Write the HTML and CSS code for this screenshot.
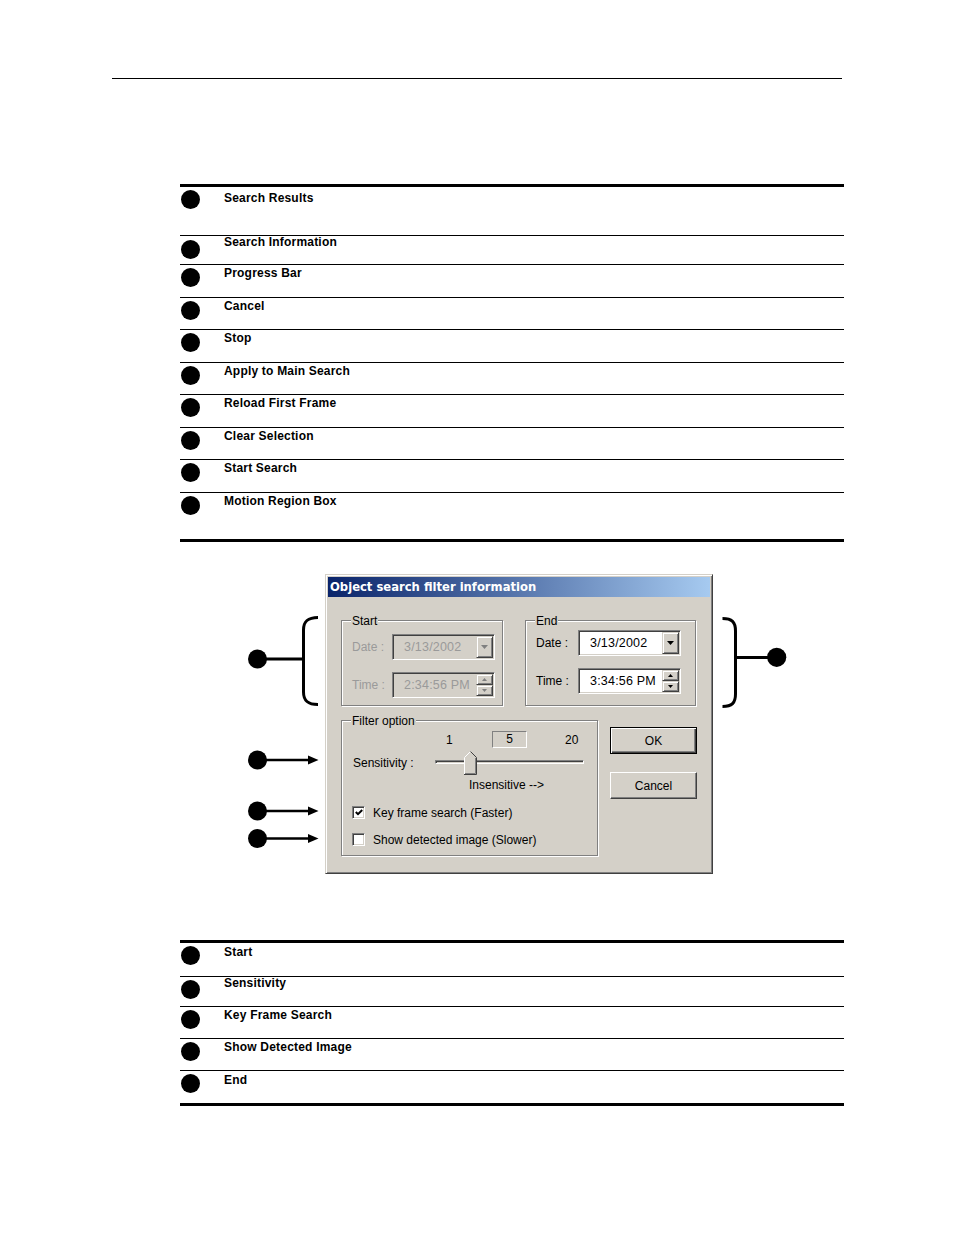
FILE: index.html
```html
<!DOCTYPE html>
<html>
<head>
<meta charset="utf-8">
<title>Object search filter information</title>
<link rel="stylesheet" href="styles.css">
</head>
<body>
<div class="page">
  <div class="toprule"></div>

  <div class="legend legend1">
    <div class="row h49 first"><span class="dot"></span><span class="lbl">Search Results</span></div>
    <div class="row h29"><span class="dot"></span><span class="lbl">Search Information</span></div>
    <div class="row h33"><span class="dot"></span><span class="lbl">Progress Bar</span></div>
    <div class="row h32"><span class="dot"></span><span class="lbl">Cancel</span></div>
    <div class="row h33"><span class="dot"></span><span class="lbl">Stop</span></div>
    <div class="row h32"><span class="dot"></span><span class="lbl">Apply to Main Search</span></div>
    <div class="row h33"><span class="dot"></span><span class="lbl">Reload First Frame</span></div>
    <div class="row h32"><span class="dot"></span><span class="lbl">Clear Selection</span></div>
    <div class="row h33"><span class="dot"></span><span class="lbl">Start Search</span></div>
    <div class="row h49 last"><span class="dot"></span><span class="lbl">Motion Region Box</span></div>
  </div>

  <div class="figure">
    <svg class="callouts" width="954" height="358" viewBox="0 542 954 358">
      <g fill="none" stroke="#000" stroke-width="3">
        <path d="M318,617.5 C308,617.5 303.5,621 303.5,630 L303.5,692 C303.5,701 308,704.5 318,704.5"/>
        <line x1="257" y1="659" x2="303.5" y2="659"/>
        <path d="M722.5,618.5 C732,618.5 735.5,622 735.5,631 L735.5,694 C735.5,703 732,706.5 722.5,706.5"/>
        <line x1="735.5" y1="657.5" x2="777" y2="657.5"/>
      </g>
      <g stroke="#000" stroke-width="2.5">
        <line x1="257" y1="760" x2="311" y2="760"/>
        <line x1="257" y1="811" x2="311" y2="811"/>
        <line x1="257" y1="838.5" x2="311" y2="838.5"/>
      </g>
      <g fill="#000">
        <circle cx="257.5" cy="659" r="9.5"/>
        <circle cx="776.7" cy="657.3" r="9.6"/>
        <circle cx="257.5" cy="760" r="9.5"/>
        <circle cx="257.5" cy="811" r="9.5"/>
        <circle cx="257.5" cy="838.5" r="9.5"/>
        <polygon points="308,755.5 318.5,760 308,764.5"/>
        <polygon points="308,806.5 318.5,811 308,815.5"/>
        <polygon points="308,834 318.5,838.5 308,843"/>
      </g>
    </svg>

    <div class="dialog">
      <div class="titlebar">Object search filter information</div>
      <div class="dlgbody">
        <div class="toprow">
          <div class="group g-start">
            <span class="glabel">Start</span>
            <div class="frow">
              <span class="flabel dis">Date :</span>
              <div class="field dis">
                <span class="ftext">3/13/2002</span>
                <span class="wbtn"><svg width="7" height="4" viewBox="0 0 7 4"><polygon points="0,0 7,0 3.5,4" fill="#808080"/></svg></span>
              </div>
            </div>
            <div class="frow">
              <span class="flabel dis">Time :</span>
              <div class="field dis">
                <span class="ftext">2:34:56 PM</span>
                <span class="spin">
                  <span class="wbtn"><svg width="5" height="3" viewBox="0 0 5 3"><polygon points="0,3 5,3 2.5,0" fill="#808080"/></svg></span>
                  <span class="wbtn"><svg width="5" height="3" viewBox="0 0 5 3"><polygon points="0,0 5,0 2.5,3" fill="#808080"/></svg></span>
                </span>
              </div>
            </div>
          </div>
          <div class="group g-end">
            <span class="glabel">End</span>
            <div class="frow">
              <span class="flabel">Date :</span>
              <div class="field">
                <span class="ftext">3/13/2002</span>
                <span class="wbtn"><svg width="7" height="4" viewBox="0 0 7 4"><polygon points="0,0 7,0 3.5,4" fill="#000"/></svg></span>
              </div>
            </div>
            <div class="frow">
              <span class="flabel">Time :</span>
              <div class="field">
                <span class="ftext">3:34:56 PM</span>
                <span class="spin">
                  <span class="wbtn"><svg width="5" height="3" viewBox="0 0 5 3"><polygon points="0,3 5,3 2.5,0" fill="#000"/></svg></span>
                  <span class="wbtn"><svg width="5" height="3" viewBox="0 0 5 3"><polygon points="0,0 5,0 2.5,3" fill="#000"/></svg></span>
                </span>
              </div>
            </div>
          </div>
        </div>

        <div class="secrow">
          <div class="group g-filter">
            <span class="glabel">Filter option</span>
            <div class="numrow">
              <span class="n1">1</span>
              <span class="n5">5</span>
              <span class="n20">20</span>
            </div>
            <div class="slrow">
              <span class="sllabel">Sensitivity :</span>
              <div class="slider">
                <div class="track"></div>
                <svg class="thumb" width="13" height="24" viewBox="0 0 13 24">
                  <polygon points="0.5,6.5 6.5,0.5 12.5,6.5 12.5,23.5 0.5,23.5" fill="#d4d0c8"/>
                  <polyline points="0.5,23 0.5,6.5 6.5,0.5" fill="none" stroke="#fff" stroke-width="1"/>
                  <polyline points="6.5,0.5 12.5,6.5 12.5,23.5 0,23.5" fill="none" stroke="#404040" stroke-width="1"/>
                  <polyline points="11.5,7 11.5,22.5 1,22.5" fill="none" stroke="#808080" stroke-width="1"/>
                </svg>
              </div>
            </div>
            <div class="insrow">Insensitive --&gt;</div>
            <div class="cbrow cb1">
              <span class="cbox"><svg width="8" height="7" viewBox="0 0 8 7"><polyline points="0.8,3 3,5.2 7.2,1" fill="none" stroke="#000" stroke-width="2"/></svg></span>
              <span class="cbtext">Key frame search (Faster)</span>
            </div>
            <div class="cbrow cb2">
              <span class="cbox"></span>
              <span class="cbtext">Show detected image (Slower)</span>
            </div>
          </div>
          <div class="btncol">
            <div class="pbtn ok">OK</div>
            <div class="pbtn cancel">Cancel</div>
          </div>
        </div>
      </div>
    </div>
  </div>

  <div class="legend legend2">
    <div class="row h34"><span class="dot"></span><span class="lbl">Start</span></div>
    <div class="row h30"><span class="dot"></span><span class="lbl">Sensitivity</span></div>
    <div class="row h32"><span class="dot"></span><span class="lbl">Key Frame Search</span></div>
    <div class="row h32"><span class="dot"></span><span class="lbl">Show Detected Image</span></div>
    <div class="row h35 last"><span class="dot"></span><span class="lbl">End</span></div>
  </div>
</div>
</body>
</html>
```

FILE: styles.css
```css
* { box-sizing: border-box; }
html, body { margin: 0; padding: 0; background: #fff; }
body { font-family: "Liberation Sans", Arial, sans-serif; color: #000; }

.page { width: 954px; height: 1235px; position: relative; overflow: hidden; }

.toprule { margin: 78px 0 0 112px; width: 730px; height: 1px; background: #000; }

/* legend tables */
.legend { margin-left: 180px; width: 664px; border-top: 3px solid #000; }
.legend1 { margin-top: 105px; }
.legend2 { margin-top: 40px; }
.row { display: flex; align-items: flex-start; border-bottom: 1px solid #000; padding-top: 2px; }
.row.last { border-bottom: 3px solid #000; }
.h29 { height: 29px; }
.h30 { height: 30px; }
.h32 { height: 32px; }
.h33 { height: 33px; }
.h34 { height: 34px; }
.h35 { height: 35px; }
.h49 { height: 49px; }
.dot { flex: none; width: 19px; height: 19px; border-radius: 50%; background: #000; margin: 1px 0 0 1px; }
.lbl { margin-left: 24px; margin-top: -1px; font-weight: bold; font-size: 12px; line-height: 14px; letter-spacing: 0.2px; white-space: nowrap; }
.h29 .lbl, .h30 .lbl { margin-top: -3px; }
.h29 .dot { margin-top: 2px; }
.row.first .lbl { margin-top: 2px; }
.h34 .lbl, .h35 .lbl { margin-top: 0; }

/* figure */
.figure { position: relative; height: 358px; padding-top: 32px; }
.callouts { position: absolute; left: 0; top: 0; }

.dialog {
  margin-left: 325px; width: 388px; height: 300px; padding: 2px;
  background: #d4d0c8;
  border: 1px solid; border-color: #d4d0c8 #404040 #404040 #d4d0c8;
  box-shadow: inset 1px 1px 0 #fff, inset -1px -1px 0 #808080;
  font-size: 12px; line-height: 14px; color: #000;
}
.titlebar {
  height: 20px; padding-left: 2px;
  background: linear-gradient(to right, #0a246a, #a6caf0);
  color: #fff; font-family: "DejaVu Sans", sans-serif; font-weight: bold;
  font-size: 11.6px; line-height: 21px; white-space: nowrap;
}
.dlgbody { padding: 23px 0 0 13px; }
.toprow { display: flex; gap: 22px; height: 86px; }
.secrow { display: flex; margin-top: 14px; }

.group { position: relative; border: 1px solid #808080; box-shadow: inset 1px 1px 0 #fff, 1px 1px 0 #fff; }
.glabel { position: absolute; left: 9px; top: -7px; background: #d4d0c8; padding: 0 1px; white-space: nowrap; }

.g-start { width: 162px; padding: 13px 0 0 10px; }
.g-end { width: 171px; padding: 9px 0 0 10px; }
.frow { display: flex; align-items: center; height: 26px; }
.frow + .frow { margin-top: 12px; }
.g-start .flabel { width: 40px; }
.g-end .flabel { width: 42px; }
.dis { color: #9a9a9a; }

.field {
  width: 103px; height: 26px; display: flex; padding: 1px; background: #fff;
  border: 1px solid; border-color: #808080 #fff #fff #808080;
  box-shadow: inset 1px 1px 0 #404040, inset -1px -1px 0 #d4d0c8;
}
.field.dis { background: #d4d0c8; }
.ftext { flex: 1; padding-left: 10px; line-height: 22px; font-size: 12.5px; letter-spacing: 0.2px; white-space: nowrap; }
.wbtn {
  width: 17px; height: 22px; display: flex; align-items: center; justify-content: center;
  background: #d4d0c8;
  border: 1px solid; border-color: #d4d0c8 #404040 #404040 #d4d0c8;
  box-shadow: inset 1px 1px 0 #fff, inset -1px -1px 0 #808080;
}
.spin { width: 17px; display: flex; flex-direction: column; }
.spin .wbtn { height: 11px; }

.g-filter { width: 257px; height: 136px; padding: 10px 0 0 10px; }
.numrow { display: flex; align-items: center; height: 17px; padding-left: 94px; }
.n1 { width: 7px; }
.n5 {
  margin-left: 39px; width: 35px; height: 17px; text-align: center; line-height: 15px;
  border: 1px solid; border-color: #808080 #fff #fff #808080;
}
.n20 { margin-left: 38px; }
.slrow { display: flex; align-items: center; height: 25px; margin-top: 2px; }
.sllabel { width: 83px; padding-left: 1px; white-space: nowrap; }
.slider { position: relative; width: 149px; height: 25px; padding-top: 10px; }
.track {
  height: 4px; background: #d4d0c8;
  border: 1px solid; border-color: #808080 #fff #fff #808080;
  box-shadow: inset 1px 1px 0 #404040;
}
.thumb { position: absolute; left: 29px; top: 1px; }
.insrow { margin-top: 3px; height: 14px; padding-left: 117px; white-space: nowrap; }
.cbrow { display: flex; align-items: center; height: 17px; }
.cb1 { margin-top: 12px; }
.cb2 { margin-top: 10px; }
.cbox {
  width: 13px; height: 13px; display: flex; align-items: center; justify-content: center; background: #fff;
  border: 1px solid; border-color: #808080 #fff #fff #808080;
  box-shadow: inset 1px 1px 0 #404040, inset -1px -1px 0 #d4d0c8;
}
.cbtext { margin-left: 8px; white-space: nowrap; }

.btncol { margin-left: 12px; display: flex; flex-direction: column; }
.pbtn { width: 87px; height: 27px; display: flex; align-items: center; justify-content: center; background: #d4d0c8; }
.ok {
  margin-top: 7px; border: 1px solid #000;
  box-shadow: inset 1px 1px 0 #fff, inset -1px -1px 0 #404040, inset -2px -2px 0 #808080;
}
.cancel {
  margin-top: 18px; border: 1px solid; border-color: #fff #404040 #404040 #fff;
  box-shadow: inset -1px -1px 0 #808080;
}
```
